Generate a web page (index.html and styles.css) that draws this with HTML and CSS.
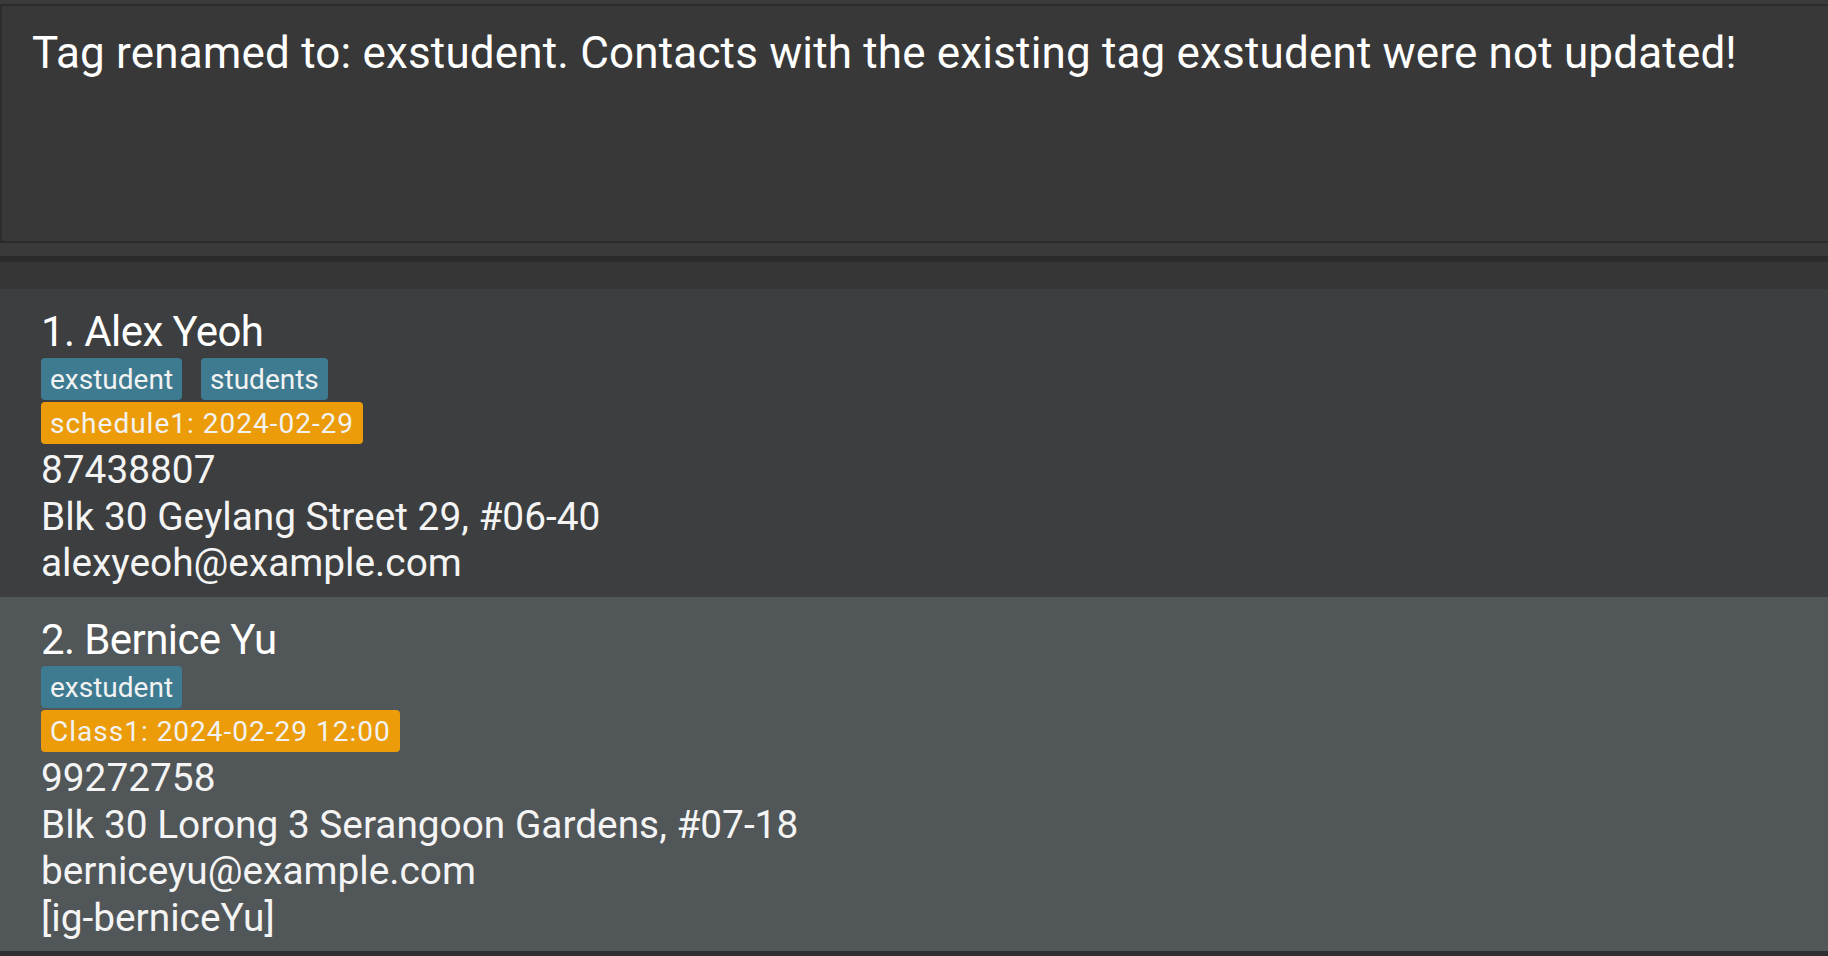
FILE: index.html
```html
<!DOCTYPE html>
<html lang="en">
<head>
<meta charset="utf-8">
<title>Address Book</title>
<link rel="stylesheet" href="styles.css">
</head>
<body>
<div class="app">
  <div class="top-strip"></div>
  <div class="result-box">
    <p class="result-text">Tag renamed to: exstudent. Contacts with the existing tag exstudent were not updated!</p>
  </div>
  <div class="gap-area"></div>
  <div class="divider"></div>
  <div class="list-head"></div>
  <div class="person-list">
    <div class="card card-even">
      <div class="name">1. Alex Yeoh</div>
      <div class="tags">
        <span class="tag">exstudent</span>
        <span class="tag">students</span>
      </div>
      <div class="tags">
        <span class="tag tag-schedule">schedule1: 2024-02-29</span>
      </div>
      <div class="field">87438807</div>
      <div class="field">Blk 30 Geylang Street 29, #06-40</div>
      <div class="field">alexyeoh@example.com</div>
    </div>
    <div class="card card-odd">
      <div class="name">2. Bernice Yu</div>
      <div class="tags">
        <span class="tag">exstudent</span>
      </div>
      <div class="tags">
        <span class="tag tag-schedule">Class1: 2024-02-29 12:00</span>
      </div>
      <div class="field">99272758</div>
      <div class="field">Blk 30 Lorong 3 Serangoon Gardens, #07-18</div>
      <div class="field">berniceyu@example.com</div>
      <div class="field">[ig-berniceYu]</div>
    </div>
  </div>
</div>
</body>
</html>
```

FILE: styles.css
```css
html, body {
  margin: 0;
  padding: 0;
  height: 100%;
}

body {
  background: #2f2f2f;
  font-family: Roboto, "Liberation Sans", sans-serif;
  color: #ffffff;
  overflow: hidden;
}

.app {
  display: flex;
  flex-direction: column;
  height: 956px;
}

.top-strip {
  height: 4px;
  background: #3a3a3a;
  border-bottom: 2px solid #2b2b2b;
}

.result-box {
  height: 214px;
  background: #383838;
  border-left: 2px solid #2c2c2c;
  border-bottom: 2px solid #2b2b2b;
  padding: 21px 30px 0;
  box-sizing: content-box;
}

.result-text {
  margin: 0;
  font-size: 44px;
  line-height: 52px;
  letter-spacing: 0.17px;
  color: #ffffff;
  white-space: nowrap;
}

.gap-area {
  height: 13px;
  background: #3a3a3a;
}

.divider {
  height: 6px;
  background: #2b2b2b;
}

.list-head {
  height: 27px;
  background: #363636;
}

.person-list {
  display: flex;
  flex-direction: column;
}

.card {
  display: flex;
  flex-direction: column;
  padding: 18px 41px 10px;
}

.card-even {
  background: #3c3e3f;
  height: 280px;
}

.card-odd {
  background: #515658;
  height: 326px;
}

.name {
  font-size: 42px;
  line-height: 50px;
  letter-spacing: -0.6px;
  margin-bottom: 1px;
}

.tags {
  display: flex;
  gap: 19px;
  margin-bottom: 2px;
}

.tag {
  background: #3e7b91;
  color: #f2f2f2;
  font-size: 28px;
  line-height: 35px;
  padding: 4px 9px 3px;
  border-radius: 4px;
}

.tag-schedule {
  background: #eb9c08;
  letter-spacing: 1px;
}

.tags + .field {
  margin-top: 1px;
}

.field {
  font-size: 38.8px;
  line-height: 46.6px;
  color: #f4f4f4;
}
```
